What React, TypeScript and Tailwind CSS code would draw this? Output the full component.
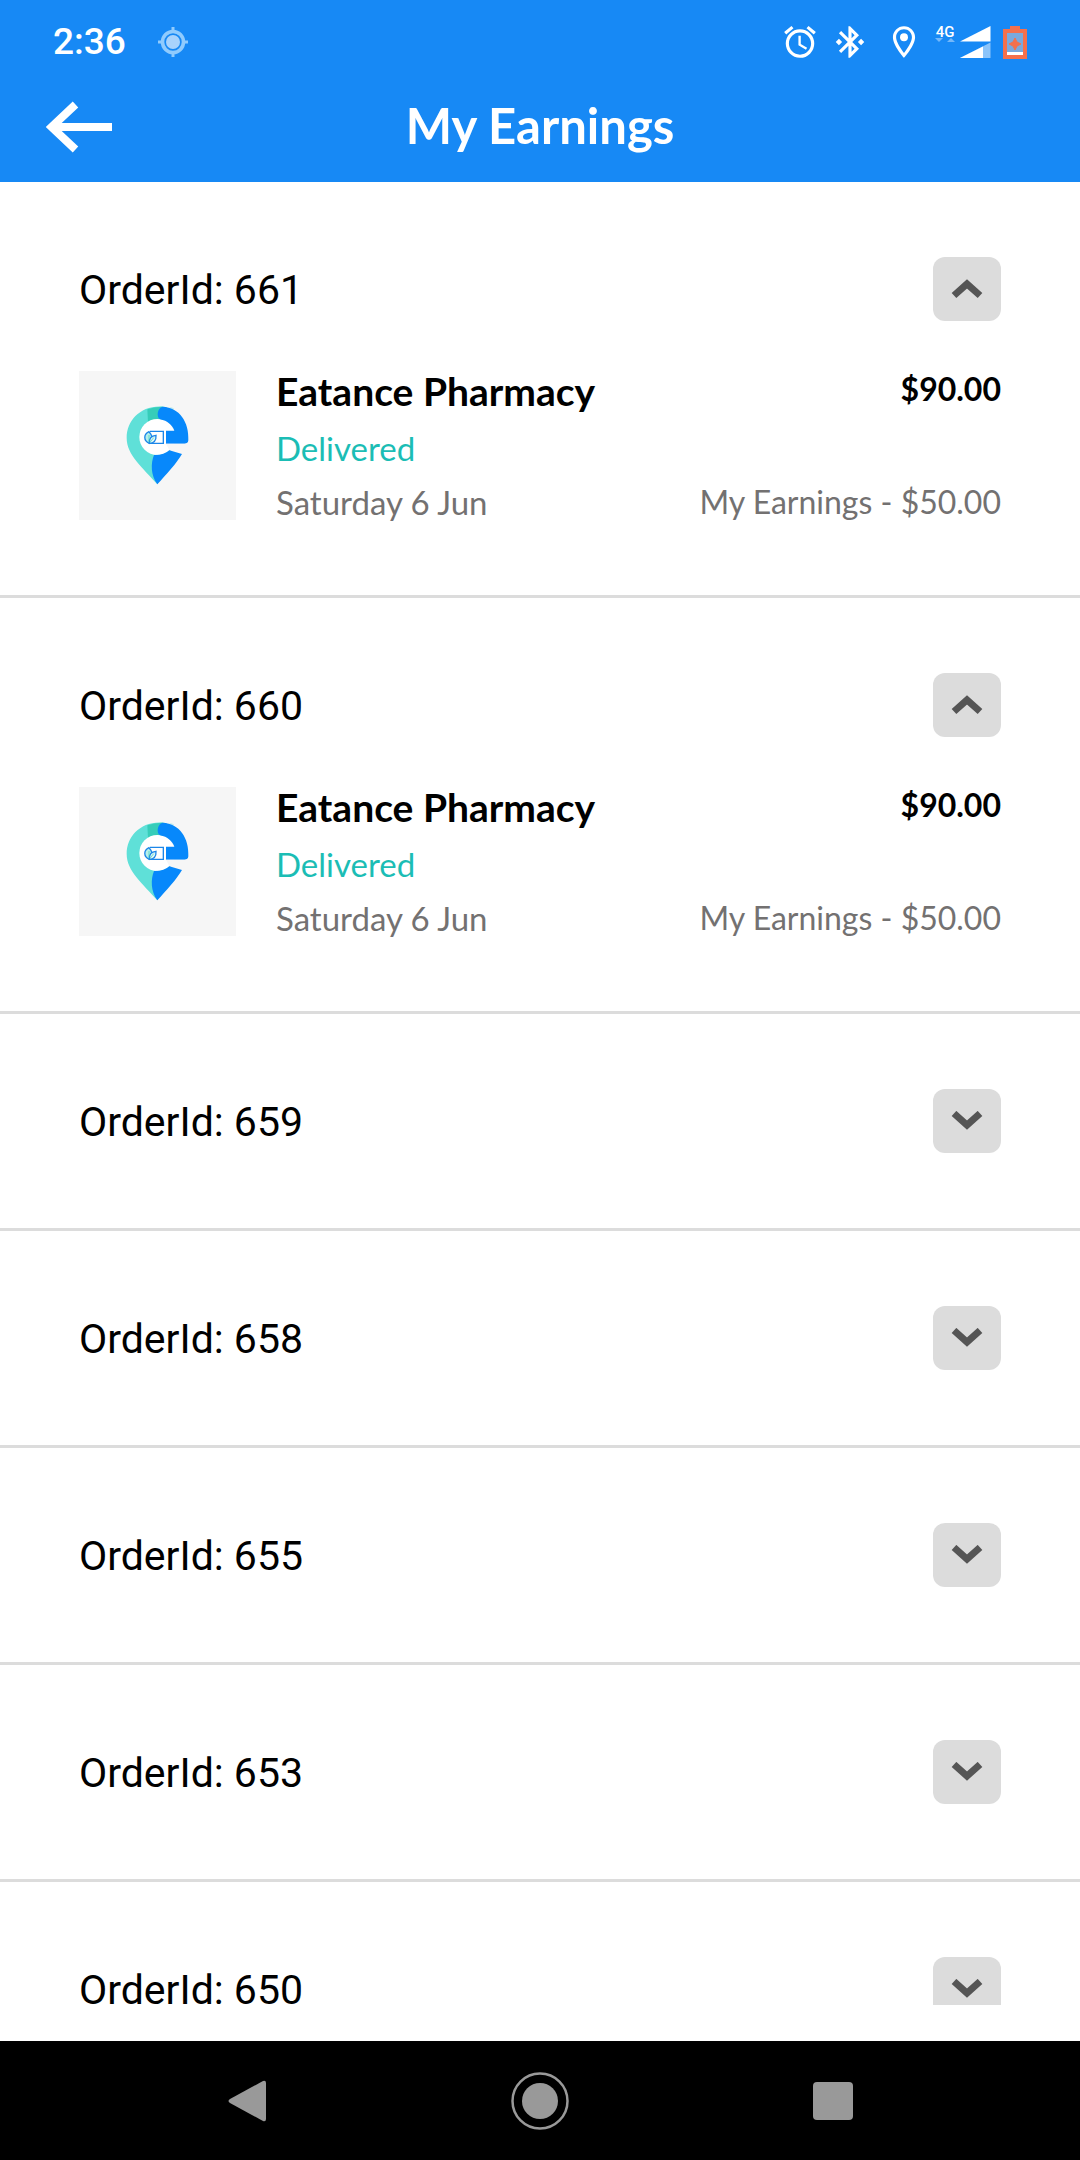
import { useState } from 'react'
import { MdAlarm, MdBluetoothConnected, MdOutlineLocationOn } from 'react-icons/md'

type Order = {
  id: number
  store: string
  status: string
  date: string
  total: string
  earnings: string
}

const orders: Order[] = [661, 660, 659, 658, 655, 653, 650].map(id => ({
  id,
  store: 'Eatance Pharmacy',
  status: 'Delivered',
  date: 'Saturday 6 Jun',
  total: '$90.00',
  earnings: '$50.00'
}))

function StatusBar() {
  return (
    <div className="flex h-[72px] items-center justify-between px-[53px] pt-3 font-['Roboto',sans-serif]">
      <div className="flex items-center gap-8">
        <span className="text-[37px] leading-[36px] font-medium">2:36</span>
        <svg className="h-[30px] w-[30px]" viewBox="0 0 30 30" fill="none" stroke="#90cbfd">
          <path d="M15 0v5M15 25v5M0 15h5M25 15h5" strokeWidth="3" />
          <circle cx="15" cy="15" r="10.5" strokeWidth="3.6" />
          <circle cx="15" cy="15" r="7" fill="#a9d3fc" stroke="none" />
        </svg>
      </div>
      <div className="flex items-center gap-3">
        <MdAlarm className="h-[38px] w-[38px]" />
        <MdBluetoothConnected className="mr-1 h-[38px] w-[38px]" />
        <MdOutlineLocationOn className="h-[38px] w-[38px]" />
        <div className="flex gap-1">
          <div className="flex flex-col items-center">
            <span className="text-[15px] leading-[12px] font-medium">4G</span>
            <svg className="h-1 w-5" viewBox="0 0 20 4" fill="#74b8fa">
              <path d="M0 0h8l-4 4zM12 4h8l-4-4z" />
            </svg>
          </div>
          <svg className="h-8 w-8" viewBox="0 0 32 32" fill="white">
            <path d="M1 15.500L31.500 0v15.500z" />
            <path d="M1 32L31.500 16.500V32z" opacity="0.5" />
            <path d="M1 32L24 20.500V32z" />
          </svg>
        </div>
        <svg className="h-[33px] w-[24px]" viewBox="0 0 24 33">
          <path d="M7 0h10v3h7v30H0V3h7z" fill="#f4704c" />
          <path d="M4 7h16v22H4z" fill="#7aa9dc" />
          <path d="M12 12l2 4 4 2-4 2-2 4-2-4-4-2 4-2z" fill="#f4704c" stroke="#f4704c" />
          <path d="M4 26h16v3H4z" fill="white" />
        </svg>
      </div>
    </div>
  )
}

function Chevron({ open }: { open: boolean }) {
  return (
    <svg className="h-5 w-8" viewBox="0 0 32 20" fill="none" stroke="#555555" strokeWidth="7">
      <path d={open ? 'M3 16.500L16 5L29 16.500' : 'M3 2.500L16 14L29 2.500'} />
    </svg>
  )
}

function StoreLogo() {
  return (
    <svg className="h-[149px] w-[157px] shrink-0 bg-[#f6f6f6]" viewBox="-63 -27 471 447" role="img" aria-label="Store logo">
      <path d="M190 80C122 74 80 122 80 173C80 226 128 262 172 313L220 200V84z" fill="#5fe0d8" />
      <path d="M142 88Q165 79 190 80L178 120Q160 119 144 127z" fill="#36cdb9" />
      <path d="M200 80C240 86 266 122 267 160V205L246 222L208 211L190 120z" fill="#f6f6f6" />
      <circle cx="172" cy="171" r="54" fill="white" />
      <path d="M188 80C171 84 169 111 180 118C203 122 217 136 223 152H198V191H254Q264 191 265 181C268 126 238 82 188 80z" fill="#0788fb" />
      <path d="M198 191H267V212L246 222L208 211z" fill="#f6f6f6" />
      <path d="M162 225Q192 226 208 211L246 222C230 250 198 284 172 313C152 286 152 250 162 225z" fill="#0788fb" />
      <path d="M192 150h5v42h-5z" fill="white" />
      <g fill="none" stroke="#1c86e8" strokeWidth="4">
        <path d="M150 154H190V190H148" />
        <path d="M147 155C130 163 130 182 148 190C158 179 158 166 147 155z" fill="#b5efea" />
        <path d="M148 190C147 176 155 167 168 166C169 180 162 189 148 190z" fill="#dff7f5" />
        <path d="M147 165V187M150 187L161 173" strokeWidth="2" stroke="#36cdb9" />
      </g>
    </svg>
  )
}

function OrderItem({ order, defaultOpen }: { order: Order; defaultOpen: boolean }) {
  const [open, setOpen] = useState(defaultOpen)

  return (
    <li className="border-b-3 border-[#dcdcdc] px-[79px] py-[75px]">
      <div className="flex h-16 items-center justify-between">
        <h2 className="pt-0.5 font-['Roboto',sans-serif] text-[41px] leading-[48px]">OrderId: {order.id}</h2>
        <button
          type="button"
          aria-expanded={open}
          aria-label={`Toggle order ${order.id}`}
          onClick={() => setOpen(!open)}
          className="flex h-16 w-[68px] items-center justify-center rounded-xl bg-[#dcdcdc]"
        >
          <Chevron open={open} />
        </button>
      </div>

      {open && (
        <div className="mt-[50px] flex gap-10">
          <StoreLogo />
          <div className="flex flex-1 flex-col justify-between text-[33px] leading-[36px]">
            <h3 className="text-[39px] leading-[40px] font-bold">{order.store}</h3>
            <p className="text-[#1bbdb5]">{order.status}</p>
            <p className="text-[#737171]">{order.date}</p>
          </div>
          <div className="flex flex-col justify-between text-right text-[32px] leading-[36px]">
            <p className="font-bold">{order.total}</p>
            <p className="text-[#737171]">My Earnings - {order.earnings}</p>
          </div>
        </div>
      )}
    </li>
  )
}

export default function App() {
  return (
    <div className="flex h-screen flex-col bg-white font-['Lato',sans-serif] text-black">
      {/* Header */}
      <header className="bg-[#1789f5] text-white">
        <StatusBar />
        <div className="grid h-[110px] grid-cols-[1fr_auto_1fr] items-center px-[46px]">
          <button type="button" aria-label="Back" className="w-[66px]">
            <svg className="h-[52px] w-[66px]" viewBox="0 0 66 52" fill="none" stroke="white" strokeWidth="8">
              <path d="M29.500 3.500L5.500 26L29.500 48.500M8 26H66" />
            </svg>
          </button>
          <h1 className="pb-1 text-[49px] leading-[56px] font-bold">My Earnings</h1>
        </div>
      </header>

      {/* Orders */}
      <main className="mb-9 min-h-0 flex-1 overflow-y-auto [scrollbar-width:none]">
        <ul>
          {orders.map((order, i) => (
            <OrderItem key={order.id} order={order} defaultOpen={i < 2} />
          ))}
        </ul>
      </main>

      {/* System navigation */}
      <nav className="grid h-[119px] grid-cols-3 items-center bg-black px-[100px]">
        <button type="button" aria-label="System back" className="mx-auto">
          <svg className="h-[42px] w-[38px]" viewBox="0 0 38 42" fill="#999999">
            <path d="M35 1Q38 0 38 3V39Q38 42 35 41L2 23Q-1 21 2 19z" />
          </svg>
        </button>
        <button type="button" aria-label="Home" className="mx-auto">
          <svg className="h-[58px] w-[58px]" viewBox="0 0 58 58">
            <circle cx="29" cy="29" r="27.500" fill="none" stroke="#999999" strokeWidth="2.500" />
            <circle cx="29" cy="29" r="18" fill="#999999" />
          </svg>
        </button>
        <button type="button" aria-label="Recent apps" className="mx-auto h-[38px] w-10 rounded-sm bg-[#999999]" />
      </nav>
    </div>
  )
}
